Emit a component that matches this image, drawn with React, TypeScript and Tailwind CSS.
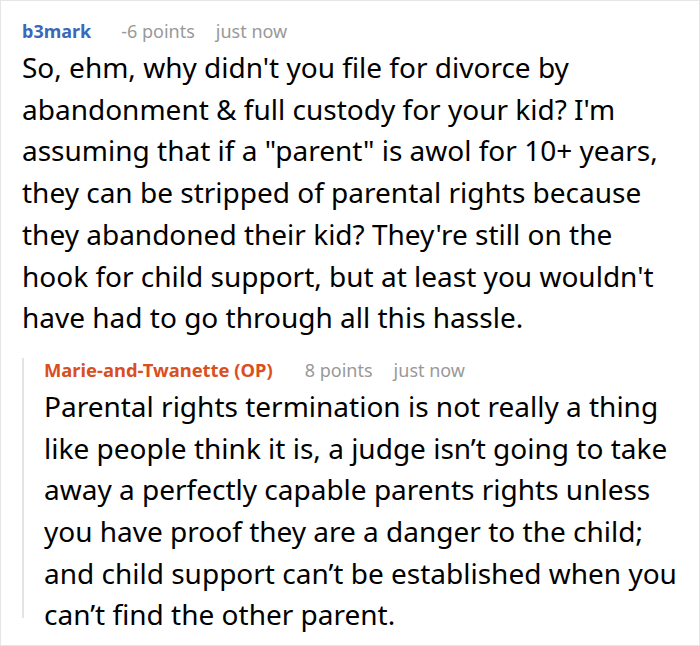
export default function App() {
  return (
    <div className="h-[646px] w-[700px] overflow-hidden border border-[#e6e6e6] bg-white font-['Noto_Sans',sans-serif] text-black">
      <div className="pl-[21px] pr-[20px] pt-[18px]">
        {/* parent comment */}
        <div className="flex items-baseline text-[18px] leading-[24px]">
          <span className="font-bold text-[#3b68b8]">b3mark</span>
          <span className="ml-[30px] text-[#999]">-6 points</span>
          <span className="ml-[21px] text-[#999]">just now</span>
        </div>
        <p className="mt-[4px] text-[28px] leading-[41.7px]">
          So, ehm, why didn't you file for divorce by abandonment &amp; full custody for your kid? I'm assuming that if a "parent" is awol for 10+ years, they can be stripped of parental rights because they abandoned their kid? They're still on the hook for child support, but at least you wouldn't have had to go through all this hassle.
        </p>

        {/* reply */}
        <div className="mt-[28px] h-[260px] border-l-2 border-[#e4e4e4] pl-[20px]">
          <div className="-mt-[9px] flex items-baseline text-[18px] leading-[24px]">
            <span className="font-bold text-[18.4px] text-[#d9501e]">Marie-and-Twanette (OP)</span>
            <span className="ml-[32px] text-[#999]">8 points</span>
            <span className="ml-[21px] text-[#999]">just now</span>
          </div>
          <p className="mt-[4px] text-[28px] leading-[41.7px]">
            Parental rights termination is not really a thing like people think it is, a judge isn’t going to take away a perfectly capable parents rights unless you have proof they are a danger to the child; and child support can’t be established when you can’t find the other parent.
          </p>
        </div>
      </div>
    </div>
  );
}
